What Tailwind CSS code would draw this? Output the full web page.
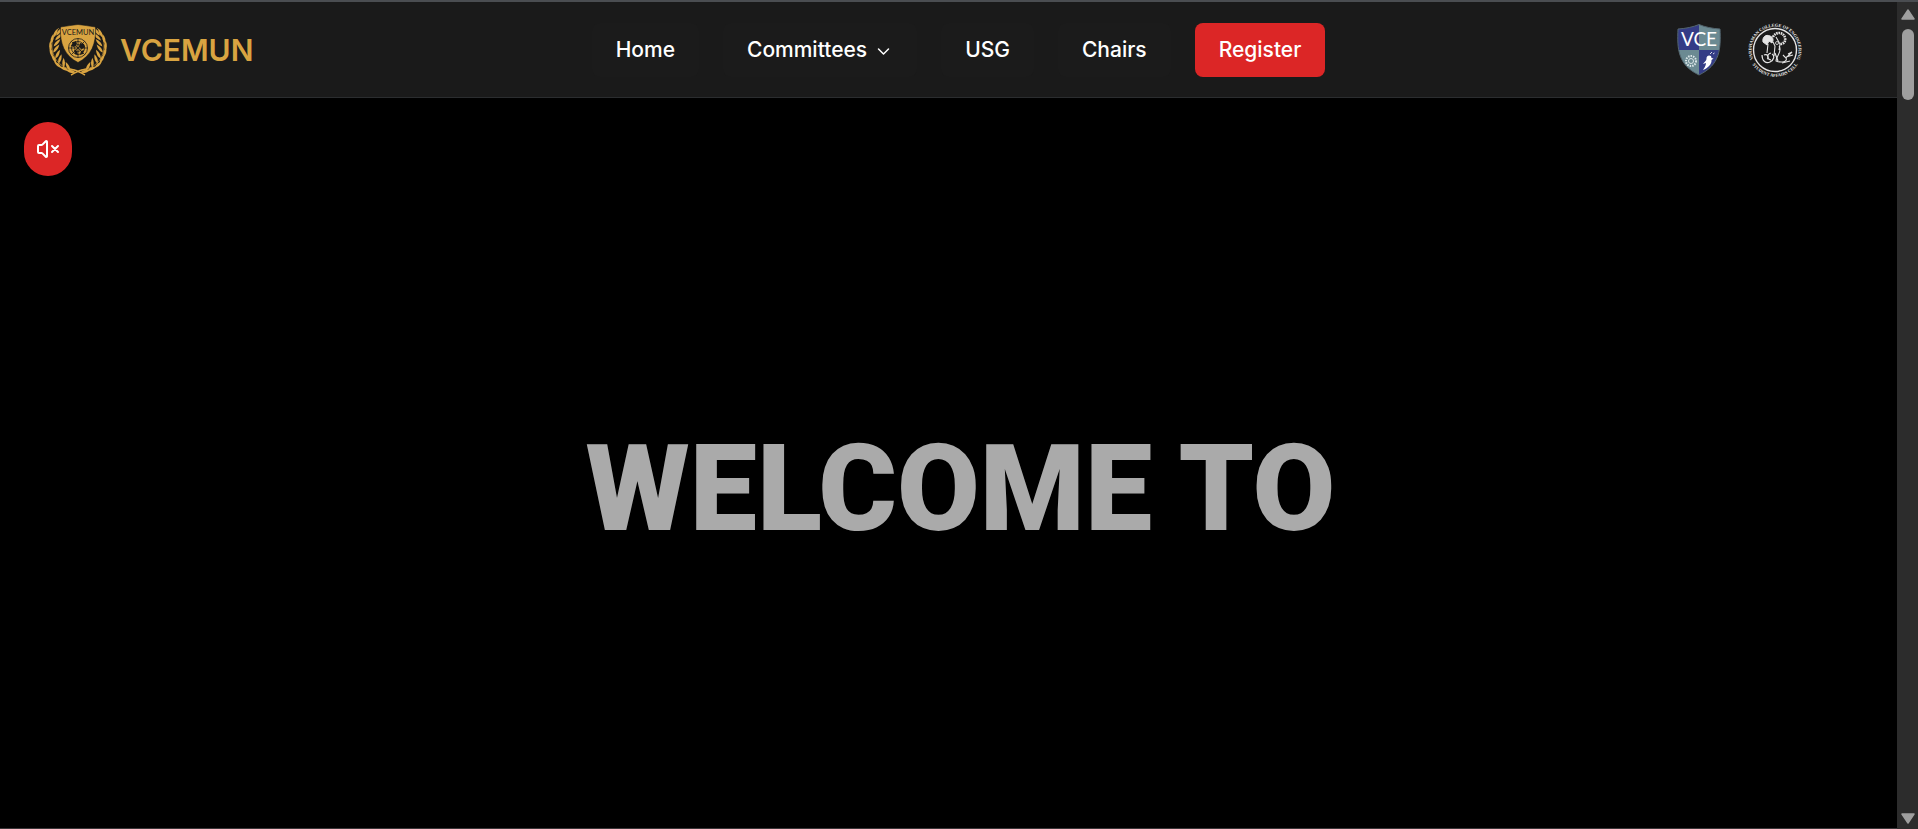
<!DOCTYPE html>
<html lang="en">
<head>
<meta charset="utf-8">
<meta name="viewport" content="width=device-width, initial-scale=1">
<title>VCEMUN</title>
<script src="https://cdn.jsdelivr.net/npm/@tailwindcss/browser@4"></script>
</head>
<body class="flex h-screen overflow-hidden border-t-2 border-[#4a4d51] bg-black font-['Inter',sans-serif] text-white">

<div class="flex min-w-0 flex-1 flex-col">
  <header class="grid grid-cols-[1fr_auto_1fr] items-center border-b border-[#2b2d2f] bg-[#1a1a1a] pt-[21px] pb-5 pl-12 pr-7">
    <a href="#" class="flex items-center gap-3 text-3xl font-semibold text-[#d9a441]">
      <svg class="h-[52px] w-[60px]" viewBox="0 0 60 52" fill="none" aria-hidden="true">
        <defs>
          <path id="leaf" d="M0 1C-2.500-1-4-4-3.500-8.500C-1-6 .8-3 0 1Z" fill="#d9a441"/>
          <g id="branch" stroke="#d9a441">
            <path d="M27 46C14 45 5 36 4 24C3.500 16 6 9 11 4" stroke-width=".6"/>
            <g stroke="none">
              <use href="#leaf" transform="translate(9 11) rotate(58)"/>
              <use href="#leaf" transform="translate(6 13) rotate(46)"/>
              <use href="#leaf" transform="translate(8 16) rotate(66)"/>
              <use href="#leaf" transform="translate(3.500 19) rotate(34)"/>
              <use href="#leaf" transform="translate(6.500 22) rotate(62)"/>
              <use href="#leaf" transform="translate(3 26) rotate(18)"/>
              <use href="#leaf" transform="translate(6 28) rotate(58)"/>
              <use href="#leaf" transform="translate(4.500 32) rotate(6)"/>
              <use href="#leaf" transform="translate(8 34) rotate(48)"/>
              <use href="#leaf" transform="translate(8 38) rotate(-8)"/>
              <use href="#leaf" transform="translate(11 39) rotate(38)"/>
              <use href="#leaf" transform="translate(13 43) rotate(-28)"/>
              <use href="#leaf" transform="translate(16 43) rotate(20)"/>
              <use href="#leaf" transform="translate(20 46) rotate(-46)"/>
              <use href="#leaf" transform="translate(22 46) rotate(-6)"/>
              <use href="#leaf" transform="translate(27 48) rotate(-56)"/>
            </g>
            <path d="M23 51C27 49 30 46 38 45" stroke-width="1.500"/>
          </g>
        </defs>
        <use href="#branch"/>
        <use href="#branch" transform="translate(60 0) scale(-1 1)"/>
        <path d="M12.500 3C19 2 25 1 30 .5C35 1 41 2 47.500 3C48.500 20 43 32 30 38.500C17 32 11.500 20 12.500 3Z" fill="#d9a441" stroke="#1a1a1a" stroke-width=".6"/>
        <text x="30" y="10.500" text-anchor="middle" font-size="7.500" font-weight="400" fill="#1a1a1a" font-family="Lato, sans-serif">VCEMUN</text>
        <g stroke="#1a1a1a" stroke-width=".8">
          <circle cx="30" cy="24" r="9.500"/><circle cx="30" cy="24" r="6.500"/><circle cx="30" cy="24" r="3.500"/>
          <path d="M30 14.500v19M20.500 24h19M23.300 17.300l13.400 13.400M36.700 17.300L23.300 30.700"/>
        </g>
        <path d="M25 18l3-1 1 3-3 3-3-1zM32 19l4 1 1 3-3 2-3-2zM26 26l3 1 1 4-3-1zM33 27l3-1-1 4-3 1z" fill="#1a1a1a"/>
      </svg>
      <span>VCEMUN</span>
    </a>

    <nav class="flex items-center gap-6 text-[21px] leading-[54px] font-medium" aria-label="Main">
      <a href="#" class="rounded-lg bg-[#1b1b1b] px-6">Home</a>
      <button type="button" class="flex items-center gap-2.5 rounded-lg bg-[#1b1b1b] px-6">Committees
        <svg class="size-4" viewBox="0 0 16 16" fill="none" stroke="currentColor" stroke-width="1.500" stroke-linecap="round" stroke-linejoin="round" aria-hidden="true"><path d="M1.500 7l5 5 5-5"/></svg>
      </button>
      <a href="#" class="rounded-lg bg-[#1b1b1b] px-6">USG</a>
      <a href="#" class="rounded-lg bg-[#1b1b1b] px-6">Chairs</a>
      <a href="#" class="rounded-lg bg-[#dc2626] px-6">Register</a>
    </nav>

    <div class="flex items-center justify-end gap-[26px] pr-[66px]">
      <svg class="h-[52px] w-11" viewBox="0 0 44 52" role="img" aria-label="VCE">
        <defs><clipPath id="shield"><path d="M1 5C9 4.500 16 3 22 .5C28 3 35 4.500 43 5C44 25 43 41 22 51C1 41 0 25 1 5Z"/></clipPath></defs>
        <g clip-path="url(#shield)">
          <path d="M0 0h22v26H0zM22 26h22v26H22z" fill="#343c86"/>
          <path d="M22 0h22v26H22zM0 26h22v26H0z" fill="#6b8a92"/>
        </g>
        <path d="M1 5C9 4.500 16 3 22 .5C28 3 35 4.500 43 5C44 25 43 41 22 51C1 41 0 25 1 5Z" fill="none" stroke="#53656f"/>
        <text x="22" y="22" text-anchor="middle" font-size="19" font-weight="400" fill="#fff" font-family="Lato, sans-serif">VCE</text>
        <g fill="none" stroke="#dbe6e8">
          <circle cx="14" cy="37" r="5" stroke-width="2" stroke-dasharray="1.500 1"/><circle cx="14" cy="37" r="2.500"/>
        </g>
        <path d="M34 32C31.500 30.500 29 32.500 29.500 35C29.500 37 27 38 26 40L29 39C29 42 27 44 26 46C31 44 35 40 34.500 36L36.500 34.500L34.500 34Z" fill="#fff"/>
        <path d="M33 30l2-2M36 30l1.500-1" stroke="#fff" stroke-width=".8"/>
      </svg>
      <svg class="-my-px size-14" viewBox="0 0 56 56" fill="none" stroke="#e4e4e4" role="img" aria-label="Vardhaman College of Engineering Student Affairs Cell">
        <defs>
          <path id="arcTop" d="M8 40.500A23.500 23.500 0 1 1 48 40.500"/>
          <path id="arcBottom" d="M1.200 31A27 27 0 0 0 54.800 31"/>
        </defs>
        <circle cx="28" cy="28" r="21.500" stroke-width="1.400"/>
        <g fill="#f0f0f0" stroke="none" font-family="Liberation Serif, serif" font-weight="700" font-size="4.400" text-anchor="middle">
          <text><textPath href="#arcTop" startOffset="50%">VARDHAMAN COLLEGE OF ENGINEERING</textPath></text>
          <text><textPath href="#arcBottom" startOffset="50%">STUDENT AFFAIRS CELL</textPath></text>
        </g>
        <path d="M16 20C15 15 19 12 23 14C26 15 27 18 25 21L22 19L20 23L16 20Z" fill="#e4e4e4"/>
        <path d="M26 15C29 9 37 10 38 16C39 20 36 22 33 22" stroke-width="2.600" stroke-dasharray="1.600 .7"/>
        <path d="M21 22L20 31M26 20L28 24L27 34M29 15L33 22L32 28M32 24C36 29 29 34 29 39C34 41 41 40 39 36L36 33M39 36L45 30L41 32M39 35L46 33" stroke-width="1.100"/>
        <path d="M15 33C15 39 19 42 23 40C27 38 28 34 25 32M17 33C20 31 23 36 20 37M24 31C20 32 19 37 24 38M28 31L31 39M35 41L43 39" stroke-width="1.200"/>
        <circle cx="30" cy="21" r="1.500" stroke-width=".8"/>
      </svg>
    </div>
  </header>

  <main class="relative flex flex-1 items-center justify-center border-b border-[#3a3538] pt-[52px] pl-6">
    <button type="button" aria-label="Unmute" class="absolute top-6 left-6 flex h-[54px] w-12 items-center justify-center rounded-3xl bg-[#dc2626]">
      <svg class="size-6" viewBox="0 0 24 24" fill="none" stroke="currentColor" stroke-width="2" stroke-linecap="round" stroke-linejoin="round" aria-hidden="true"><path d="M11 4.702a.705.705 0 0 0-1.203-.498L6.413 7.587A1.400 1.400 0 0 1 5.416 8H3a1 1 0 0 0-1 1v6a1 1 0 0 0 1 1h2.416a1.400 1.400 0 0 1 .997.413l3.383 3.384A.705.705 0 0 0 11 19.298z"/><path d="M22 9l-6 6M16 9l6 6"/></svg>
    </button>
    <h1 class="font-['Roboto',sans-serif] text-[120px] leading-none font-black whitespace-nowrap text-[#aaaaaa]">WELCOME TO</h1>
  </main>
</div>

<div class="flex w-[21px] shrink-0 flex-col items-center bg-[#2c2c2c] pt-[7px] pb-[5px]" aria-hidden="true">
  <svg class="h-[11px] w-[14px]" viewBox="0 0 14 11"><path d="M7 1L13 10H1Z" fill="#9f9f9f" stroke="#9f9f9f" stroke-width="1.500" stroke-linejoin="round"/></svg>
  <div class="mt-[9px] h-[71px] w-3 rounded-full bg-[#9f9f9f]"></div>
  <svg class="mt-auto h-[11px] w-[14px]" viewBox="0 0 14 11"><path d="M7 10L1 1H13Z" fill="#9f9f9f" stroke="#9f9f9f" stroke-width="1.500" stroke-linejoin="round"/></svg>
</div>

</body>
</html>
